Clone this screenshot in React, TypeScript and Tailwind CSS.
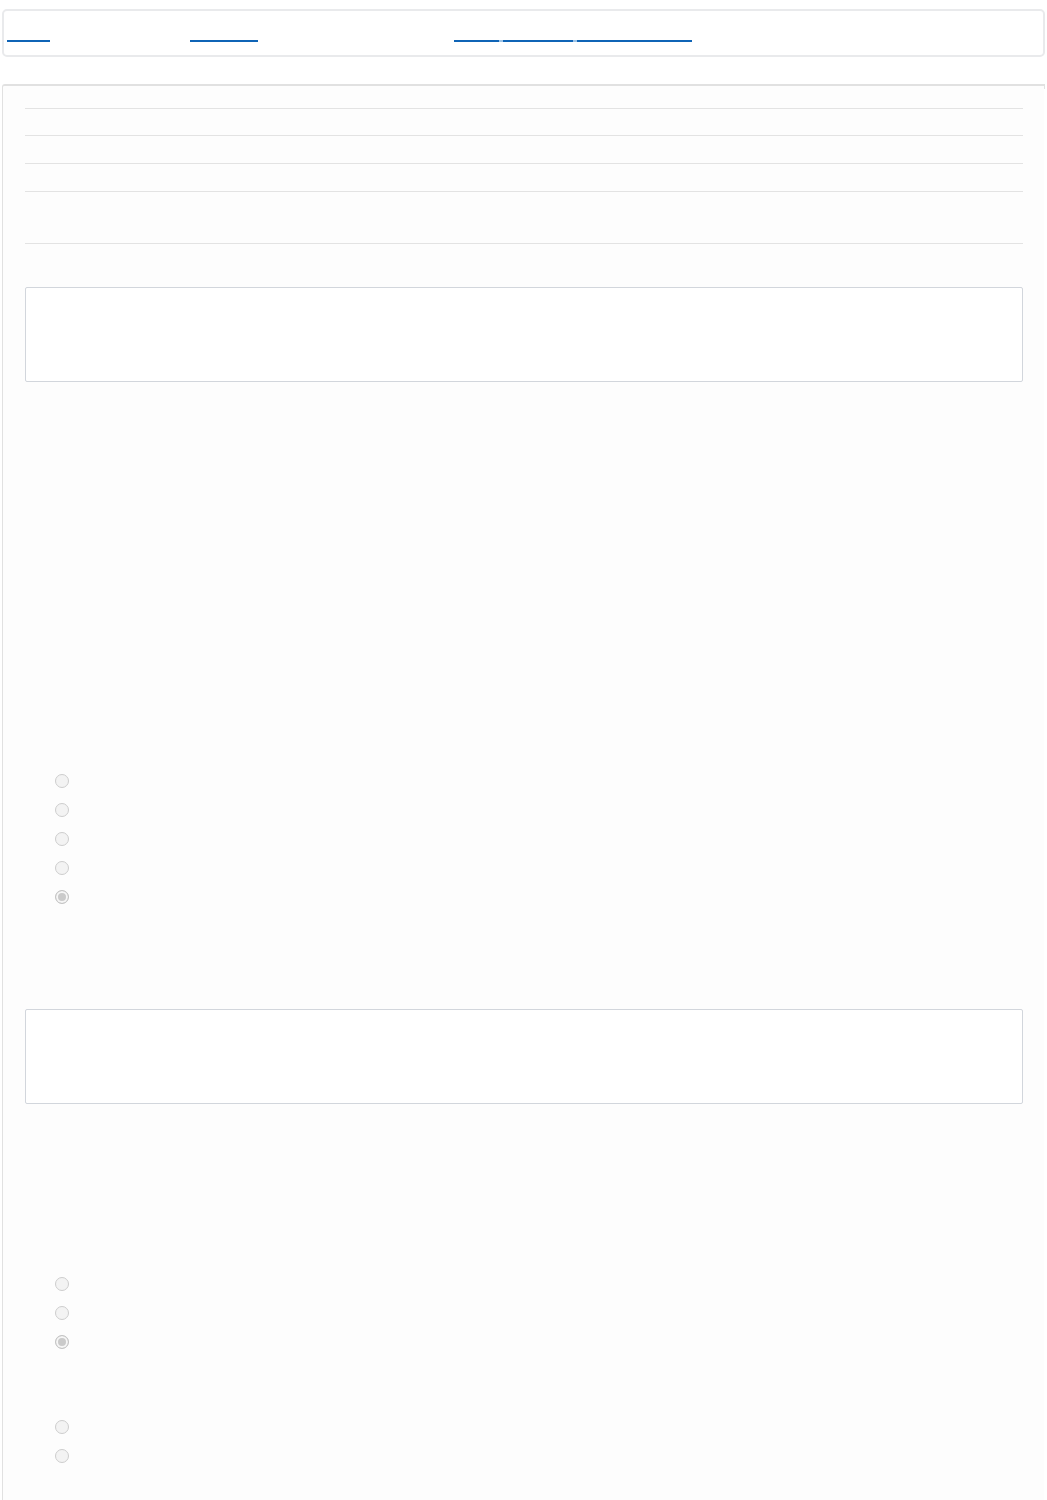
import React from "react";

function Radio({ checked = false }: { checked?: boolean }) {
  return (
    <div className="flex h-[29px] items-center pl-[30px]">
      <input
        type="radio"
        disabled
        defaultChecked={checked}
        className="m-0 h-[14px] w-[14px] appearance-none rounded-full border border-[#cdcdcd] bg-[#f3f3f3] checked:border-[#c4c4c4] checked:bg-[#cacaca] checked:shadow-[inset_0_0_0_2px_#f6f6f6]"
      />
    </div>
  );
}

function NavLink({ w, label }: { w: string; label: string }) {
  return (
    <a
      className={`block whitespace-nowrap border-b-2 border-[#0f64b6] text-[14px] leading-[16px] text-transparent ${w}`}
    >
      {label}
    </a>
  );
}

export default function App() {
  return (
    <div className="min-h-[1500px] bg-white font-['Liberation_Sans',Arial,sans-serif] text-sm">
      {/* top navigation */}
      <nav className="mx-[2px] mt-[9px] h-[48px] rounded-[5px] border-2 border-[#e9eaec] bg-white pl-[3px] pt-[13px]">
        <div className="flex items-start">
          <NavLink w="w-[43px]" label="Home" />
          <div className="ml-[140px]">
            <NavLink w="w-[68px]" label="Products" />
          </div>
          <div className="ml-[196px] flex">
            <NavLink w="w-[45px]" label="Blog" />
            <span className="block h-[18px] w-[4px] border-b-2 border-[#9cc3e6]" />
            <NavLink w="w-[70px]" label="Contact" />
            <span className="block h-[18px] w-[4px] border-b-2 border-[#9cc3e6]" />
            <NavLink w="w-[115px]" label="Documentation" />
          </div>
        </div>
      </nav>

      {/* main panel */}
      <div className="relative ml-[2px] mr-[3px] mt-[27px] min-h-[1416px] rounded-tl-[3px] border-l border-t-2 border-[#e1e1e1] bg-[#fdfdfd] pl-[22px] pr-[21px]">
        <span className="absolute -right-px -top-[2px] block h-[5px] w-px bg-[#e1e1e1]" />

        {/* table */}
        <div className="flex flex-col pt-[22px]">
          <div className="h-[27px] border-t border-[#e3e3e3]" />
          <div className="h-[28px] border-t border-[#e3e3e3]" />
          <div className="h-[28px] border-t border-[#e3e3e3]" />
          <div className="h-[53px] border-y border-[#e3e3e3]" />
        </div>

        {/* box 1 */}
        <div className="mt-[43px] h-[95px] rounded-[2px] border border-[#d2d6dc] bg-white" />

        {/* radio group 1 */}
        <div className="mt-[384px] flex flex-col">
          <Radio />
          <Radio />
          <Radio />
          <Radio />
          <Radio checked />
        </div>

        {/* box 2 */}
        <div className="mt-[98px] h-[95px] rounded-[2px] border border-[#d2d6dc] bg-white" />

        {/* radio group 2 */}
        <div className="mt-[165px] flex flex-col">
          <Radio />
          <Radio />
          <Radio checked />
        </div>
        <div className="mt-[56px] flex flex-col">
          <Radio />
          <Radio />
        </div>
      </div>
    </div>
  );
}
